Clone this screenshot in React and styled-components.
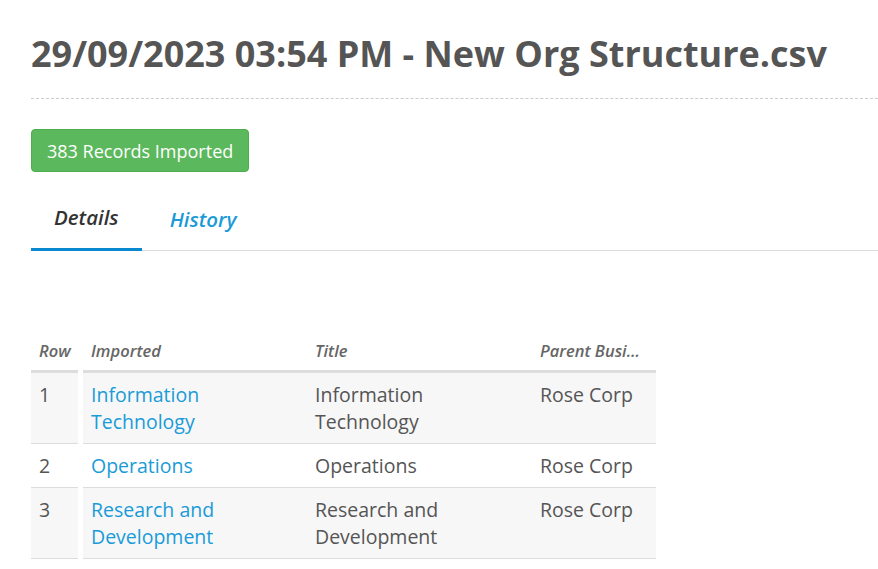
import React from 'react';
import styled, { createGlobalStyle } from 'styled-components';

const GlobalStyle = createGlobalStyle`
  body {
    margin: 0;
    background: #fff;
    font-family: 'Open Sans', 'Noto Sans', sans-serif;
    color: #555;
  }
`;

const rows = [
  { n: 1, imported: 'Information Technology', title: 'Information Technology', parent: 'Rose Corp' },
  { n: 2, imported: 'Operations', title: 'Operations', parent: 'Rose Corp' },
  { n: 3, imported: 'Research and Development', title: 'Research and Development', parent: 'Rose Corp' },
];

const columns = [
  { key: 'n', label: 'Row', width: 47 },
  { key: 'imported', label: 'Imported', width: 224, link: true },
  { key: 'title', label: 'Title', width: 225 },
  { key: 'parent', label: 'Parent Business Unit', width: 124 },
];

const App = () => {
  return (
    <>
      <GlobalStyle />
      <Page>
        <Header>
          <Title>29/09/2023 03:54 PM - New Org Structure.csv</Title>
        </Header>
        <Badge>383 Records Imported</Badge>
        <Tabs>
          <Tab active>Details</Tab>
          <Tab>History</Tab>
        </Tabs>
        <Table>
          <Row>
            {columns.map((c, i) => (
              <HeadCell key={c.key} width={c.width} first={i === 0}>
                {c.label}
              </HeadCell>
            ))}
          </Row>
          {rows.map((r, ri) => (
            <Row key={r.n}>
              {columns.map((c, i) => (
                <Cell key={c.key} width={c.width} first={i === 0} striped={ri % 2 === 0}>
                  {c.link ? <CellLink href="#">{r[c.key]}</CellLink> : r[c.key]}
                </Cell>
              ))}
            </Row>
          ))}
        </Table>
      </Page>
    </>
  );
};

export default App;

const Page = styled.div`
  padding: 26px 0 0 31px;
`;

const Header = styled.div`
  border-bottom: 1px dashed #ccc;
  padding-bottom: 16px;
`;

const Title = styled.h1`
  margin: 0;
  font-size: 36px;
  line-height: 56px;
  font-weight: 700;
  color: #555;
`;

const Badge = styled.div`
  display: inline-block;
  margin-top: 30px;
  padding: 0 15px;
  height: 43px;
  line-height: 43px;
  box-sizing: border-box;
  background: #5cb85c;
  border: 1px solid #4cae4c;
  border-radius: 4px;
  color: #fff;
  font-size: 18px;
`;

const Tabs = styled.div`
  display: flex;
  margin-top: 28px;
  border-bottom: 1px solid #ddd;
`;

const Tab = styled.div`
  padding: ${({ active }) => (active ? '3px 23px 17px' : '5px 23px 15px 28px')};
  margin-bottom: -1px;
  font-size: 20.5px;
  line-height: 28px;
  font-style: italic;
  font-weight: 600;
  color: ${({ active }) => (active ? '#333' : '#1a9bd7')};
  border-bottom: 3px solid ${({ active }) => (active ? '#0a88d0' : 'transparent')};
`;

const Table = styled.div`
  margin-top: 82px;
  display: flex;
  flex-direction: column;
`;

const Row = styled.div`
  display: flex;
`;

const HeadCell = styled.div`
  width: ${({ width }) => width}px;
  margin-right: ${({ first }) => (first ? 5 : 0)}px;
  box-sizing: border-box;
  padding: 8px ${({ first }) => (first ? 0 : 8)}px 9px 8px;
  font-size: 16.5px;
  line-height: 20px;
  font-style: italic;
  font-weight: 600;
  color: #666;
  border-bottom: 3px solid #ddd;
  white-space: nowrap;
  overflow: ${({ first }) => (first ? 'visible' : 'hidden')};
  text-overflow: ellipsis;
`;

const Cell = styled.div`
  width: ${({ width }) => width}px;
  margin-right: ${({ first }) => (first ? 5 : 0)}px;
  box-sizing: border-box;
  padding: 8px;
  font-size: 19.5px;
  line-height: 27px;
  color: #555;
  background: ${({ striped }) => (striped ? '#f7f7f7' : '#fff')};
  border-bottom: 1px solid #ddd;
`;

const CellLink = styled.a`
  color: #1a9bd7;
  text-decoration: none;
`;
